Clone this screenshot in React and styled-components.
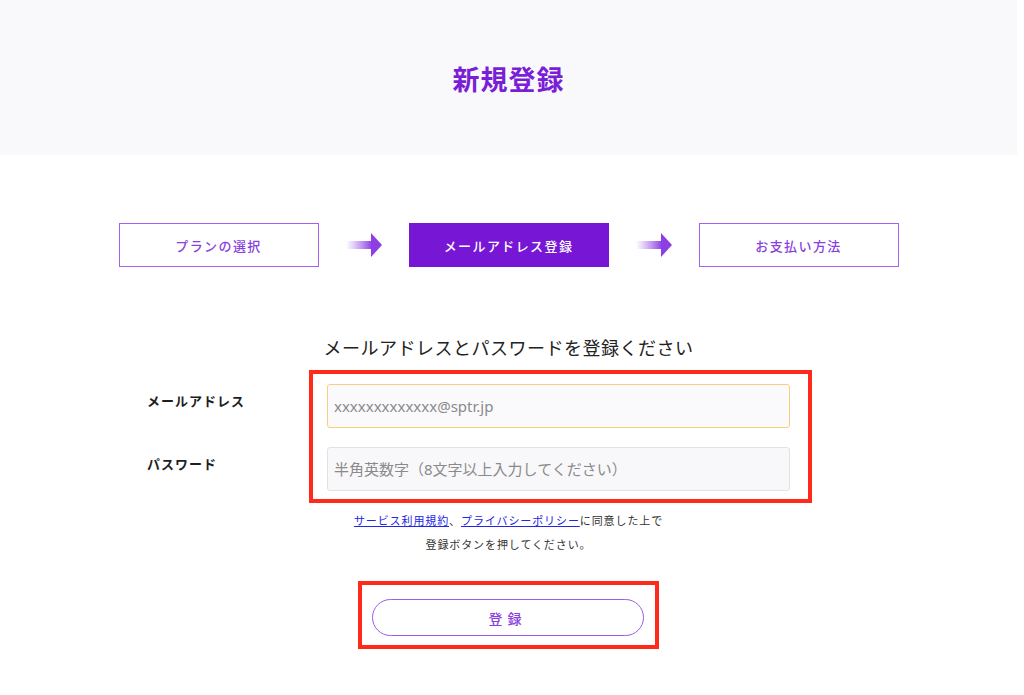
import styled, { createGlobalStyle } from 'styled-components';

const GlobalStyle = createGlobalStyle`
  html, body {
    margin: 0;
    padding: 0;
    background: #ffffff;
  }
  body {
    font-family: "Noto Sans CJK JP", "Noto Sans", sans-serif;
    color: #222;
  }
  * {
    box-sizing: border-box;
  }
`;

const Page = styled.div`
  width: 1017px;
  padding-bottom: 40px;
`;

const Header = styled.header`
  height: 155px;
  background-color: #f9f9fc;
  display: flex;
  align-items: center;
  justify-content: center;
`;

const Title = styled.h1`
  margin: 0;
  font-size: 27px;
  font-weight: 700;
  color: #7a1fd6;
  letter-spacing: 1px;
  padding-top: 2px;
`;

const Steps = styled.div`
  display: flex;
  align-items: center;
  justify-content: center;
  gap: 27px;
  margin-top: 68px;
`;

const Step = styled.div`
  width: 200px;
  height: 44px;
  display: flex;
  align-items: center;
  justify-content: center;
  font-size: 13px;
  font-weight: 500;
  letter-spacing: 1.4px;
  border: 1.5px solid #a461f0;
  color: ${(p) => (p.$active ? '#ffffff' : '#8a3fe0')};
  background-color: ${(p) => (p.$active ? '#7816d6' : '#ffffff')};
  border-color: ${(p) => (p.$active ? '#7816d6' : '#a461f0')};
`;

const Heading = styled.h2`
  margin: 67px 0 0;
  text-align: center;
  font-size: 18px;
  line-height: 26px;
  font-weight: 400;
  letter-spacing: 0.5px;
  color: #222;
`;

const FormRow = styled.div`
  display: grid;
  grid-template-columns: 162px 503px;
  margin: 10px 0 0 147px;
`;

const Labels = styled.div`
  display: flex;
  flex-direction: column;
  gap: 43px;
  padding-top: 21px;
`;

const Label = styled.label`
  font-size: 13px;
  line-height: 20px;
  font-weight: 700;
  letter-spacing: 1px;
  color: #1e1e1e;
`;

const Highlight = styled.div`
  border: 4px solid #ff2a1a;
  padding: ${(p) => p.$pad};
`;

const Fields = styled(Highlight)`
  display: flex;
  flex-direction: column;
  gap: 19px;
`;

const Input = styled.input`
  display: block;
  width: 100%;
  height: 44px;
  padding: 0 6px;
  border-radius: 3px;
  font-family: "Noto Sans", "Noto Sans CJK JP", sans-serif;
  font-size: 15px;
  color: #333;
  outline: none;
  border: 1.5px solid ${(p) => (p.$focused ? '#f9cf7c' : '#e2e2e4')};
  background-color: ${(p) => (p.$focused ? '#fafafc' : '#f8f8fa')};
  &::placeholder {
    color: #8a8a8a;
  }
`;

const Note = styled.p`
  margin: 5px 0 0;
  text-align: center;
  font-size: 11px;
  line-height: 24px;
  letter-spacing: 0.9px;
  color: #333;
`;

const Link = styled.a`
  color: #2424e6;
  text-decoration: underline;
`;

const ButtonArea = styled.div`
  display: flex;
  justify-content: center;
  margin-top: 25px;
`;

const Submit = styled.button`
  display: block;
  width: 272px;
  height: 37px;
  border-radius: 19px;
  border: 1.3px solid #9b5ee8;
  background: #ffffff;
  color: #8a3fe0;
  font-family: "Noto Sans CJK JP", sans-serif;
  font-size: 14px;
  font-weight: 500;
  letter-spacing: 5px;
  padding-left: 5px;
  cursor: pointer;
`;

function Arrow() {
  return (
    <svg width="36" height="24" viewBox="0 0 36 24">
      <defs>
        <linearGradient id="shaft" x1="0" x2="1" y1="0" y2="0">
          <stop offset="0" stopColor="#a267ee" stopOpacity="0" />
          <stop offset="1" stopColor="#8d3fe4" stopOpacity="1" />
        </linearGradient>
      </defs>
      <rect x="0" y="8" width="26" height="8" fill="url(#shaft)" />
      <polygon points="25,0 36,12 25,24" fill="#8d3fe4" />
    </svg>
  );
}

export default function App() {
  return (
    <Page>
      <GlobalStyle />
      <Header>
        <Title>新規登録</Title>
      </Header>
      <Steps>
        <Step>プランの選択</Step>
        <Arrow />
        <Step $active>メールアドレス登録</Step>
        <Arrow />
        <Step>お支払い方法</Step>
      </Steps>
      <Heading>メールアドレスとパスワードを登録ください</Heading>
      <FormRow>
        <Labels>
          <Label>メールアドレス</Label>
          <Label>パスワード</Label>
        </Labels>
        <Fields $pad="10px 18px 8px 14px">
          <Input $focused placeholder="xxxxxxxxxxxxx@sptr.jp" />
          <Input type="password" placeholder="半角英数字（8文字以上入力してください）" />
        </Fields>
      </FormRow>
      <Note>
        <Link href="#">サービス利用規約</Link>、<Link href="#">プライバシーポリシー</Link>に同意した上で
        <br />
        登録ボタンを押してください。
      </Note>
      <ButtonArea>
        <Highlight $pad="14px 11px 9px 10px">
          <Submit>登録</Submit>
        </Highlight>
      </ButtonArea>
    </Page>
  );
}
